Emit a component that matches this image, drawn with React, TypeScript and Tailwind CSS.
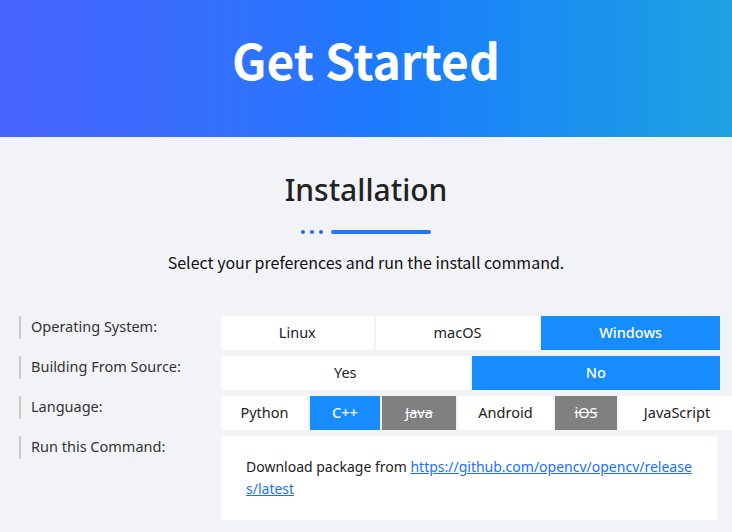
import React from "react";

const sans = { fontFamily: '"Noto Sans", "Liberation Sans", sans-serif' };

function Opt({
  label,
  active,
  disabled,
  grow,
}: {
  label: string;
  active?: boolean;
  disabled?: boolean;
  grow?: string;
}) {
  const base = "h-[34px] flex items-center justify-center text-[14.5px] whitespace-nowrap";
  const color = active
    ? "bg-[#168cff] text-white font-medium"
    : disabled
    ? "bg-[#808080] text-white line-through"
    : "bg-white text-[#222]";
  return <div className={`${base} ${color} ${grow ?? ""}`}>{label}</div>;
}

function Label({ text }: { text: string }) {
  return (
    <div className="h-[23px] border-l-2 border-[#cccccc] pl-[10px] text-[14.5px] leading-[20px] text-[#333] flex items-start">
      {text}
    </div>
  );
}

export default function App() {
  return (
    <div className="w-[732px] h-[532px] overflow-hidden bg-[#f2f3f7]" style={sans}>
      <div className="h-[137px] bg-linear-to-r from-[#4763fe] via-[#1e78ff] to-[#20a1e1] flex items-center justify-center">
        <h1
          className="text-white font-bold text-[48px] leading-none pb-[20px]"
          style={{ fontFamily: '"Noto Sans CJK KR", "Noto Sans", sans-serif' }}
        >
          Get Started
        </h1>
      </div>

      <div className="flex flex-col items-center pt-[33px]">
        <h2 className="text-[30px] font-medium text-[#222] leading-[40px]">Installation</h2>
        <div className="mt-[20px] flex items-center gap-[5px]">
          <span className="w-[4px] h-[4px] rounded-full bg-[#1f6fe8]" />
          <span className="w-[4px] h-[4px] rounded-full bg-[#1f6fe8]" />
          <span className="w-[4px] h-[4px] rounded-full bg-[#1f6fe8]" />
          <span className="ml-[3px] w-[100px] h-[4px] rounded-full bg-[#2474ff]" />
        </div>
        <p
          className="mt-[16px] text-[16px] text-[#111] leading-[24px]"
          style={{ fontFamily: '"Noto Sans CJK KR", "Noto Sans", sans-serif' }}
        >
          Select your preferences and run the install command.
        </p>
      </div>

      <div className="mt-[42px] pl-[19px] grid grid-cols-[202px_499px] gap-y-[6px]">
        <Label text="Operating System:" />
        <div className="flex gap-[2px]">
          <Opt label="Linux" grow="flex-auto" />
          <Opt label="macOS" grow="flex-auto" />
          <Opt label="Windows" active grow="flex-auto" />
        </div>

        <Label text="Building From Source:" />
        <div className="flex gap-[2px]">
          <Opt label="Yes" grow="flex-1" />
          <Opt label="No" active grow="flex-1" />
        </div>

        <Label text="Language:" />
        <div className="flex gap-[2px]">
          <Opt label="Python" grow="w-[87px] shrink-0" />
          <Opt label="C++" active grow="w-[70px] shrink-0" />
          <Opt label="Java" disabled grow="w-[74px] shrink-0" />
          <Opt label="Android" grow="w-[95px] shrink-0" />
          <Opt label="iOS" disabled grow="w-[62px] shrink-0" />
          <Opt label="JavaScript" grow="w-[116px] shrink-0" />
        </div>

        <Label text="Run this Command:" />
        <div className="w-[496px] bg-white pl-[25px] pr-[20px] py-[20px] text-[14px] leading-[22px] text-[#222] break-all">
          Download package from{" "}
          <a href="#" className="text-[#1a6fff] underline">
            https://github.com/opencv/opencv/releases/latest
          </a>
        </div>
      </div>
    </div>
  );
}
